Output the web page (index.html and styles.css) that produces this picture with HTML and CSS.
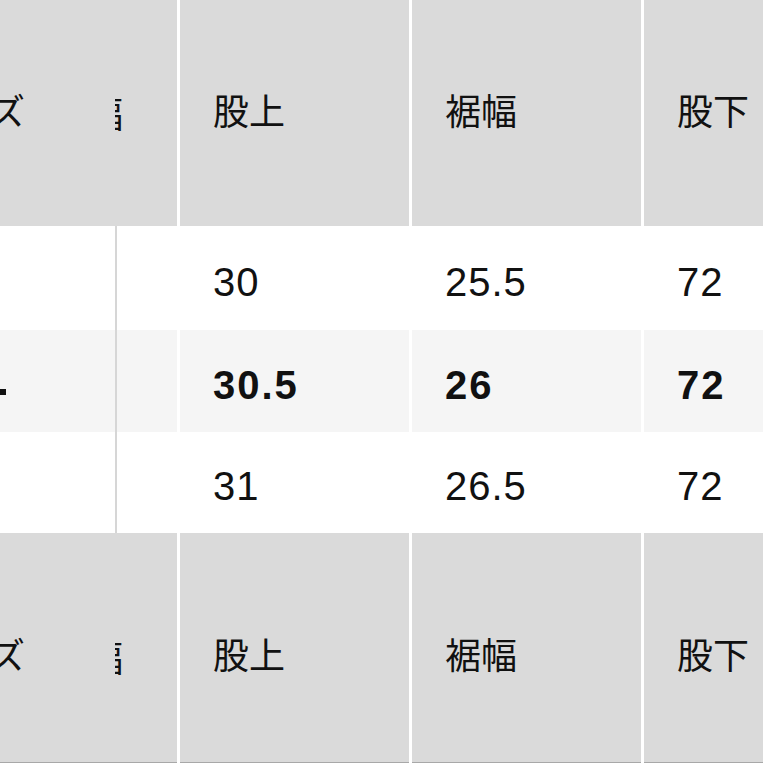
FILE: index.html
```html
<!DOCTYPE html>
<html lang="ja">
<head>
<meta charset="utf-8">
<link rel="stylesheet" href="styles.css">
</head>
<body>
<div class="table">
  <div class="cell head first">
    <span class="cut">サイズ</span>
    <span class="slice"><span>幅</span></span>
  </div>
  <div class="cell head">股上</div>
  <div class="cell head">裾幅</div>
  <div class="cell head">股下</div>

  <div class="cell body r1 first"><div class="inner"></div></div>
  <div class="cell body r1">30</div>
  <div class="cell body r1">25.5</div>
  <div class="cell body r1">72</div>

  <div class="cell body r2 alt first"><div class="inner"><span class="mark"></span></div></div>
  <div class="cell body r2 alt bold">30.5</div>
  <div class="cell body r2 alt bold">26</div>
  <div class="cell body r2 alt bold">72</div>

  <div class="cell body r3 first"><div class="inner"></div></div>
  <div class="cell body r3">31</div>
  <div class="cell body r3">26.5</div>
  <div class="cell body r3">72</div>

  <div class="cell head h2 first">
    <span class="cut">サイズ</span>
    <span class="slice"><span>幅</span></span>
  </div>
  <div class="cell head h2">股上</div>
  <div class="cell head h2">裾幅</div>
  <div class="cell head h2">股下</div>
</div>
</body>
</html>
```

FILE: styles.css
```css
html, body {
  margin: 0;
  padding: 0;
  background: #ffffff;
  overflow: hidden;
}

.table {
  display: grid;
  grid-template-columns: 177px 229px 229px 1fr;
  grid-template-rows: 226px 104px 102px 101px 230px;
  column-gap: 3px;
  width: 763px;
  height: 763px;
  overflow: hidden;
  background: #ffffff;
}

.cell {
  display: flex;
  align-items: center;
  padding-left: 33px;
  color: #111111;
  overflow: hidden;
  white-space: nowrap;
}

.head {
  background: #dadada;
  font-family: "Noto Sans CJK JP", "Noto Sans", sans-serif;
  font-size: 36px;
  padding-bottom: 9px;
  box-sizing: border-box;
}

.head.h2 {
  padding-bottom: 0;
  padding-top: 11px;
  border-bottom: 1px solid #a8a8a8;
}

.head.first {
  padding-left: 0;
}

.cut {
  margin-left: -82px;
}

.slice {
  display: inline-block;
  width: 8px;
  overflow: hidden;
  margin-left: 90px;
  margin-top: 6px;
}

.slice span {
  display: block;
  margin-left: -28px;
}

.body {
  background: #ffffff;
  font-family: "Liberation Sans", Arial, sans-serif;
  font-size: 40px;
  letter-spacing: 1px;
  padding-top: 8px;
  box-sizing: border-box;
}

.body.alt {
  background: #f5f5f5;
}

.bold {
  font-weight: bold;
  letter-spacing: 2px;
}

.body.first {
  padding: 0;
  align-items: stretch;
}

.inner {
  width: 115px;
  border-right: 2px solid #d6d6d6;
  display: flex;
  align-items: center;
}

.mark {
  display: block;
  width: 6px;
  height: 6px;
  background: #111111;
  margin-top: 22px;
}
```
